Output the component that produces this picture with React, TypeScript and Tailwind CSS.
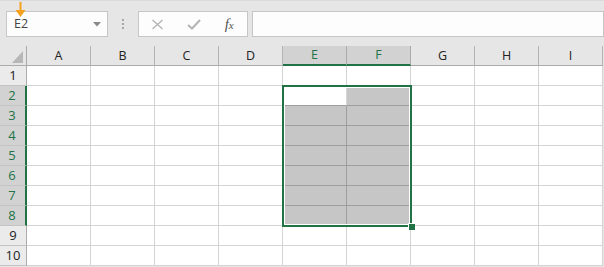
import React from 'react';

const COLS = ['A', 'B', 'C', 'D', 'E', 'F', 'G', 'H', 'I'];
const ROWS = [1, 2, 3, 4, 5, 6, 7, 8, 9, 10];

function isSelCol(c: string) {
  return c === 'E' || c === 'F';
}
function isSelRow(r: number) {
  return r >= 2 && r <= 8;
}

function ColHeader({ c }: { c: string }) {
  const sel = isSelCol(c);
  return (
    <div
      className={
        sel
          ? 'w-[64px] h-[20px] shrink-0 flex items-center justify-center pt-[1px] bg-[#d2d2d2] text-[#217346] border-r border-r-[#ababab] border-b-2 border-b-[#217346] text-[12.5px]'
          : 'w-[64px] h-[20px] shrink-0 flex items-center justify-center pt-[2px] bg-[#e6e6e6] text-[#222] border-r border-r-[#b4b4b4] border-b border-b-[#ababab] text-[12.5px]'
      }
    >
      {c}
    </div>
  );
}

function RowHeader({ r }: { r: number }) {
  const sel = isSelRow(r);
  return (
    <div
      className={
        sel
          ? 'w-[27px] h-[20px] shrink-0 flex items-center justify-center pr-[1px] bg-[#d2d2d2] text-[#217346] border-r-2 border-r-[#217346] border-b border-b-[#c4c4c4] text-[13px]'
          : 'w-[27px] h-[20px] shrink-0 flex items-center justify-center bg-[#ebebeb] text-[#222] border-r border-r-[#ababab] border-b border-b-[#c4c4c4] text-[13px]'
      }
    >
      {r}
    </div>
  );
}

function Cell({ c, r }: { c: string; r: number }) {
  const inSel = isSelCol(c) && isSelRow(r);
  const active = c === 'E' && r === 2;
  let cls = 'w-[64px] h-[20px] shrink-0 bg-white border-r border-b border-[#d4d4d4]';
  if (inSel && !active) cls = 'w-[64px] h-[20px] shrink-0 bg-[#c6c6c6] border-r border-b border-[#9e9e9e]';
  if (active) cls = 'w-[64px] h-[20px] shrink-0 bg-white border-r border-r-[#d4d4d4] border-b border-b-[#9e9e9e]';
  return <div className={cls} />;
}

export default function App() {
  return (
    <div className="relative w-[604px] h-[267px] overflow-hidden bg-[#e6e6e6] font-['Open_Sans',sans-serif]">
      {/* Top bar */}
      <div className="h-[46px] flex items-start pt-[10px] border-t border-t-[#dadada]">
        <div className="relative ml-[6px] w-[102px] h-[26px] bg-[#fdfdfd] border border-[#c6c6c6] flex items-center pl-[7px] text-[12.5px] text-[#444]">
          <span className="pt-[1px]">E2</span>
          <svg className="ml-auto mr-[6px]" width="8" height="5" viewBox="0 0 8 5">
            <path d="M0 0 L8 0 L4 4.5 Z" fill="#8a8a8a" />
          </svg>
          <svg className="absolute left-[8px] top-[-10px]" width="11" height="16" viewBox="0 0 11 16">
            <rect x="4.5" y="0" width="2" height="10" fill="#f4a11e" />
            <path d="M0.5 8 L10.5 8 L5.5 15 Z" fill="#f4a11e" />
          </svg>
        </div>
        <div className="w-[30px] h-[26px] flex flex-col items-center justify-center gap-[2px]">
          <div className="w-[2px] h-[2px] bg-[#a6a6a6]" />
          <div className="w-[2px] h-[2px] bg-[#a6a6a6]" />
          <div className="w-[2px] h-[2px] bg-[#a6a6a6]" />
        </div>
        <div className="w-[110px] h-[26px] bg-[#fdfdfd] border border-[#c6c6c6] flex items-center pl-[1px]">
          <div className="w-[36px] flex justify-center">
            <svg width="13" height="11" viewBox="0 0 13 11">
              <path d="M1.5 1 L11.5 10 M11.5 1 L1.5 10" stroke="#b5b5b5" strokeWidth="1.4" />
            </svg>
          </div>
          <div className="w-[36px] flex justify-center">
            <svg width="14" height="11" viewBox="0 0 14 11">
              <path d="M1 6 L5 9.5 L13 1" stroke="#b5b5b5" strokeWidth="2" fill="none" />
            </svg>
          </div>
          <div className="w-[36px] flex justify-center">
            <span className="italic font-['Liberation_Serif',serif] text-[15px] text-[#555] leading-none">
              f<span className="text-[11px]">x</span>
            </span>
          </div>
        </div>
        <div className="ml-[4px] flex-1 h-[26px] bg-[#fdfdfd] border border-[#c6c6c6]" />
      </div>

      {/* Header row */}
      <div className="flex">
        <div className="relative w-[27px] h-[20px] shrink-0 bg-[#e6e6e6] border-r border-r-[#ababab] border-b border-b-[#ababab]">
          <svg className="absolute left-[12px] top-[5px]" width="11" height="12" viewBox="0 0 11 12">
            <path d="M11 0 L11 12 L0 12 Z" fill="#b7b7b7" />
          </svg>
        </div>
        {COLS.map((c) => (
          <ColHeader key={c} c={c} />
        ))}
      </div>

      {/* Rows */}
      {ROWS.map((r) => (
        <div key={r} className="flex">
          <RowHeader r={r} />
          {COLS.map((c) => (
            <Cell key={c} c={c} r={r} />
          ))}
        </div>
      ))}

      {/* Selection border overlay */}
      <div className="absolute left-[282px] top-[85px] w-[130px] h-[142px] border-2 border-[#217346] shadow-[inset_0_0_0_1px_#ffffff] pointer-events-none" />
      {/* Fill handle */}
      <div className="absolute left-[408px] top-[223px] w-[7px] h-[7px] bg-[#217346] border-l border-t border-white" />
    </div>
  );
}
